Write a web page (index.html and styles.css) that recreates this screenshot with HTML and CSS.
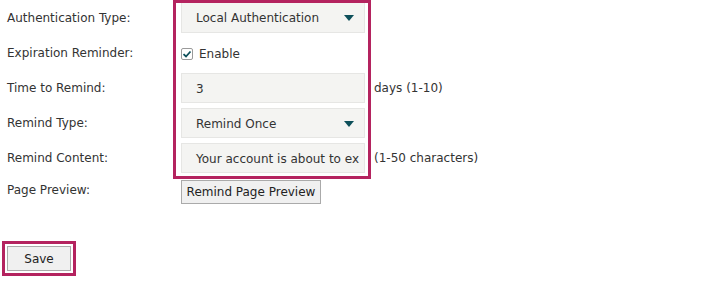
FILE: index.html
```html
<!DOCTYPE html>
<html>
<head>
<meta charset="utf-8">
<link rel="stylesheet" href="styles.css">
</head>
<body>
<div class="form">
  <div class="labels">
    <div class="label">Authentication Type:</div>
    <div class="label">Expiration Reminder:</div>
    <div class="label">Time to Remind:</div>
    <div class="label">Remind Type:</div>
    <div class="label">Remind Content:</div>
    <div class="label last">Page Preview:</div>
  </div>
  <div class="mid">
    <div class="box">
      <div class="field select"><span>Local Authentication</span><span class="caret"></span></div>
      <div class="field check">
        <span class="checkbox"><svg width="10" height="10" viewBox="0 0 10 10"><path d="M1.5 5.2 L4 7.5 L8.5 2.5" fill="none" stroke="#0d4f5a" stroke-width="1.8"/></svg></span>
        <span>Enable</span>
      </div>
      <div class="field input"><span>3</span></div>
      <div class="field select"><span>Remind Once</span><span class="caret"></span></div>
      <div class="field input"><span>Your account is about to ex</span></div>
    </div>
    <button class="btn preview">Remind Page Preview</button>
  </div>
  <div class="units">
    <div class="unit"></div>
    <div class="unit"></div>
    <div class="unit">days (1-10)</div>
    <div class="unit"></div>
    <div class="unit">(1-50 characters)</div>
  </div>
</div>
<div class="save-wrap">
  <button class="btn save">Save</button>
</div>
</body>
</html>
```
FILE: styles.css
```css
html, body {
  margin: 0;
  padding: 0;
  background: #fff;
}
body {
  font-family: "DejaVu Sans", Verdana, sans-serif;
  font-size: 12px;
  color: #333;
  width: 721px;
  height: 281px;
  overflow: hidden;
}
.form {
  display: flex;
}
.labels {
  width: 166px;
  padding-left: 7px;
  padding-top: 1px;
}
.label {
  height: 35px;
  line-height: 35px;
  white-space: nowrap;
}
.label.last {
  height: 28px;
  line-height: 28px;
}
.mid {
  width: 198px;
}
.box {
  border: 3px solid #b4235f;
  padding: 0 3px 3px 5px;
  display: flex;
  flex-direction: column;
  gap: 5px;
}
.field {
  height: 30px;
  box-sizing: border-box;
  display: flex;
  align-items: center;
  white-space: nowrap;
  overflow: hidden;
  padding-top: 1px;
}
.select, .input {
  background: #f4f4f2;
  border: 1px solid #e6e6e4;
  padding-left: 14px;
}
.input {
  padding-right: 8px;
}
.select {
  justify-content: space-between;
  padding-right: 10px;
}
.field:first-child {
  border-top: none;
  height: 30px;
}
.caret {
  width: 0;
  height: 0;
  border-left: 5px solid transparent;
  border-right: 5px solid transparent;
  border-top: 6px solid #0d4f5a;
}
.check {
  gap: 6px;
}
.checkbox {
  width: 10px;
  height: 10px;
  border: 1px solid #9a9a9a;
  border-radius: 2px;
  display: flex;
  align-items: center;
  justify-content: center;
  background: #fff;
}
.btn {
  font-family: "DejaVu Sans", Verdana, sans-serif;
  font-size: 12px;
  color: #222;
  background: #f0f0f0;
  border: 1px solid #aaa;
  padding: 0;
  margin: 0;
}
.preview {
  display: block;
  margin: 1px 0 0 8px;
  height: 24px;
  width: 140px;
}
.units {
  padding-left: 3px;
  padding-top: 1px;
}
.unit {
  height: 35px;
  line-height: 35px;
  white-space: nowrap;
}
.save-wrap {
  margin: 42px 0 0 7px;
}
.save {
  width: 64px;
  height: 25px;
  outline: 3px solid #b4235f;
  outline-offset: 2px;
}
```
